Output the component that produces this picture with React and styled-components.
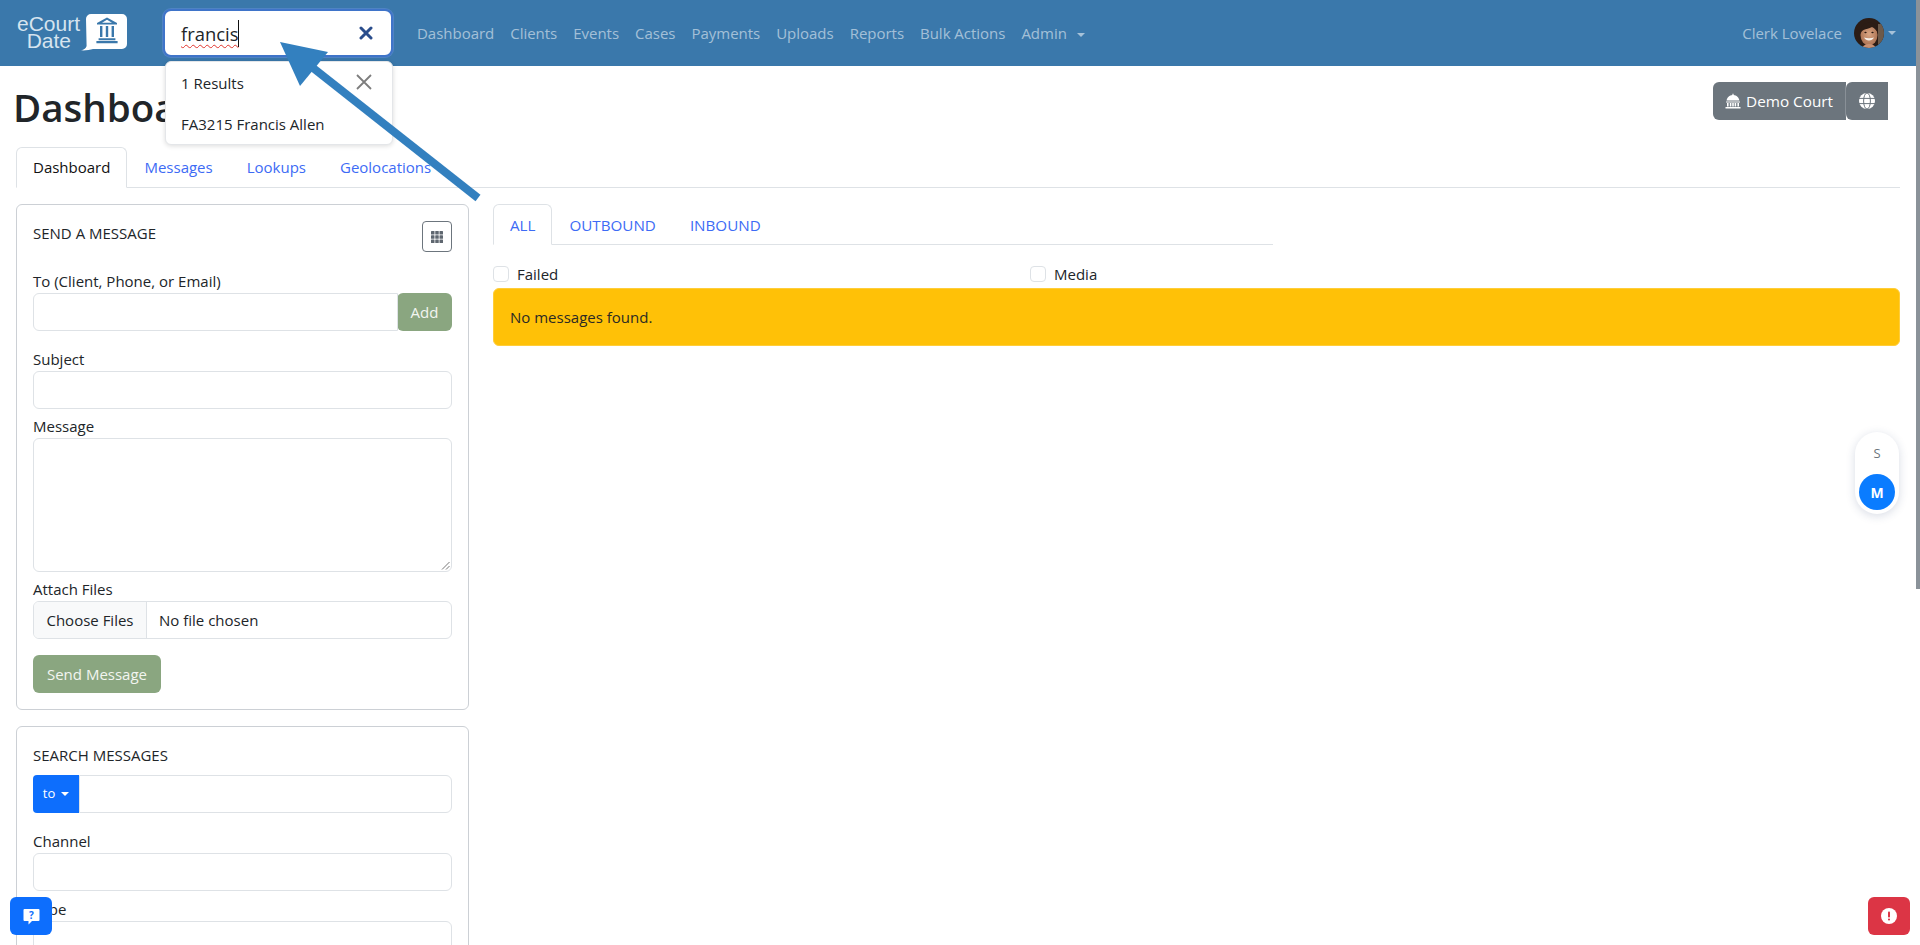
import React from "react";
import styled, { createGlobalStyle } from "styled-components";

const Global = createGlobalStyle`
  html, body { margin: 0; padding: 0; height: 945px; overflow: hidden; background: #fff; }
  body { font-family: "Open Sans", "Noto Sans", "Liberation Sans", sans-serif; font-size: 15px; line-height: 1.5; color: #212529; }
  * { box-sizing: border-box; }
`;

const Page = styled.div`
  position: relative;
  width: 1920px;
  height: 945px;
  overflow: hidden;
`;

const Navbar = styled.nav`
  height: 66px;
  background: #3a78ab;
  display: flex;
  align-items: center;
  padding: 0 24px 0 16px;
`;

const Logo = styled.div`
  width: 112px;
  height: 38px;
  margin-right: 35px;
  display: flex;
  align-items: center;
  flex: none;
  position: relative;
  top: -1px;
`;

const LogoWords = styled.div`
  width: 64px;
  display: flex;
  flex-direction: column;
  align-items: flex-end;
  font-family: "Liberation Sans", Arial, sans-serif;
  font-size: 21px;
  line-height: 17.5px;
  color: #d6e4ef;
`;

const LogoDate = styled.span`
  margin-right: 9px;
`;

const SearchBox = styled.div`
  width: 230px;
  height: 48px;
  flex: none;
  background: #fff;
  border: 2px solid #3f74c9;
  border-radius: 8px;
  box-shadow: 0 0 0 1px rgba(96, 140, 215, 0.55);
  display: flex;
  align-items: center;
  justify-content: space-between;
  padding: 0 18px 0 16px;
`;

const SearchText = styled.span`
  font-size: 18.4px;
  line-height: 27px;
  color: #212529;
  border-right: 1px solid #111;
  text-decoration: underline wavy #e0342c 1.4px;
  text-underline-offset: 3px;
  text-decoration-skip-ink: none;
`;

const ClearIcon = styled.svg`
  width: 14px;
  height: 14px;
  display: block;
  color: #2a4d8c;
`;

const NavLinks = styled.div`
  display: flex;
  align-items: center;
  gap: 16px;
  margin-left: 24px;
`;

const NavLink = styled.a`
  color: rgba(255, 255, 255, 0.55);
  font-size: 15px;
  letter-spacing: -0.02px;
  white-space: nowrap;
`;

const Caret = styled.span`
  display: inline-block;
  width: 0;
  height: 0;
  margin-left: ${(p) => p.$ml || "10px"};
  vertical-align: 2px;
  border-top: 4.8px solid ${(p) => p.$c || "rgba(255,255,255,0.55)"};
  border-left: 4.8px solid transparent;
  border-right: 4.8px solid transparent;
`;

const UserMenu = styled.div`
  margin-left: auto;
  display: flex;
  align-items: center;
  gap: 12px;
`;

const UserAvatar = styled.span`
  display: flex;
  align-items: center;
`;

const Main = styled.main`
  padding: 0 20px 0 16px;
`;

const TitleRow = styled.div`
  height: 81px;
  display: flex;
  justify-content: space-between;
  align-items: flex-start;
  margin-left: -3px;
`;

const Title = styled.h1`
  margin: 17px 0 0;
  font-size: 38.5px;
  font-weight: 600;
  line-height: 48px;
  color: #212529;
`;

const CourtGroup = styled.div`
  display: flex;
  margin: 16px 12px 0 0;
`;

const CourtButton = styled.div`
  height: 38px;
  background: #6c757d;
  color: #fff;
  font-size: 15.3px;
  display: flex;
  align-items: center;
  gap: 5px;
  padding: ${(p) => (p.$globe ? "0 13px" : "0 13px 0 12px")};
  border-radius: 6px 0 0 6px;
  white-space: nowrap;
  box-shadow: ${(p) => (p.$globe ? "-1px 0 0 rgba(255,255,255,0.2)" : "none")};
`;

const TopTabs = styled.div`
  height: 41px;
  display: flex;
  border-bottom: 1px solid #dee2e6;
`;

const TopTab = styled.a`
  height: 41px;
  padding: 8px 16px 8px;
  border: 1px solid ${(p) => (p.$active ? "#dee2e6" : "transparent")};
  border-bottom-color: ${(p) => (p.$active ? "#fff" : "transparent")};
  border-radius: 6px 6px 0 0;
  background: ${(p) => (p.$active ? "#fff" : "transparent")};
  color: ${(p) => (p.$active ? "#111" : "#3d6bf5")};
  white-space: nowrap;
`;

const Columns = styled.div`
  display: flex;
  gap: 24px;
  margin-top: 16px;
  align-items: flex-start;
`;

const Sidebar = styled.aside`
  width: 453px;
  flex: none;
  display: flex;
  flex-direction: column;
  gap: 16px;
`;

const Card = styled.section`
  border: 1px solid #ccd0d5;
  border-radius: 6px;
  padding: 16px;
`;

const CardHead = styled.div`
  display: flex;
  justify-content: space-between;
  align-items: flex-start;
  height: 48px;
`;

const CardTitle = styled.div`
  font-size: 15px;
  line-height: 22px;
  margin-top: 1px;
  color: #212529;
  text-transform: uppercase;
`;

const GridButton = styled.div`
  width: 30px;
  height: 31px;
  border: 1px solid #6c757d;
  border-radius: 4px;
  display: flex;
  align-items: center;
  justify-content: center;
`;

const Field = styled.div`
  margin-bottom: ${(p) => p.$mb || "16px"};
`;

const Label = styled.label`
  display: block;
  height: 24px;
  line-height: 24px;
  font-size: 15px;
  color: #212529;
`;

const InputGroup = styled.div`
  display: flex;
`;

const Input = styled.div`
  flex: 1;
  height: ${(p) => p.$h || "38px"};
  background: #fff;
  border: 1px solid #dee2e6;
  border-radius: ${(p) => p.$r || "6px"};
  position: relative;
`;

const Grip = styled.svg`
  position: absolute;
  right: 1px;
  bottom: 1px;
  width: 9px;
  height: 9px;
`;

const SageButton = styled.div`
  height: 38px;
  width: ${(p) => p.$w};
  flex: none;
  background: #8aa680;
  color: #f2f5f0;
  border-radius: 6px;
  display: flex;
  align-items: center;
  justify-content: center;
  margin-left: ${(p) => p.$ml || "0"};
`;

const FileInput = styled.div`
  height: 38px;
  border: 1px solid #dee2e6;
  border-radius: 6px;
  display: flex;
  align-items: center;
  overflow: hidden;
`;

const FileButton = styled.div`
  height: 100%;
  width: 113px;
  background: #f8f9fa;
  border-right: 1px solid #dee2e6;
  display: flex;
  align-items: center;
  justify-content: center;
`;

const FileName = styled.div`
  padding-left: 12px;
`;

const SearchHead = styled.div`
  line-height: 22px;
  margin: 1px 0 9px;
  text-transform: uppercase;
`;

const SelectButton = styled.div`
  width: 46px;
  height: 38px;
  flex: none;
  background: #0d6efd;
  color: #fff;
  border-radius: 4px 0 0 4px;
  font-size: 13px;
  display: flex;
  align-items: center;
  justify-content: center;
`;

const Content = styled.div`
  flex: 1;
  min-width: 0;
`;

const MsgTabs = styled.div`
  width: 780px;
  height: 41px;
  display: flex;
  border-bottom: 1px solid #dee2e6;
`;

const MsgTab = styled.a`
  height: 41px;
  padding: 9px 16px 7px;
  border: 1px solid ${(p) => (p.$active ? "#dee2e6" : "transparent")};
  border-bottom-color: ${(p) => (p.$active ? "#fff" : "transparent")};
  border-radius: 6px 6px 0 0;
  color: #3d6bf5;
  font-size: 15.2px;
  white-space: nowrap;
`;

const Filters = styled.div`
  display: grid;
  grid-template-columns: 537px 1fr;
  margin-top: 17px;
  height: 26px;
`;

const Check = styled.label`
  display: flex;
  align-items: center;
  gap: 8px;
  height: 24px;
`;

const Box = styled.span`
  width: 16px;
  height: 16px;
  border: 1px solid #dee2e6;
  border-radius: 4px;
  background: #fff;
`;

const Alert = styled.div`
  height: 58px;
  background: #ffc107;
  border: 1px solid #ffcd39;
  border-radius: 6px;
  padding: 1px 16px 0;
  display: flex;
  align-items: center;
  color: #2b2a24;
`;

const Dropdown = styled.div`
  position: absolute;
  left: 165px;
  top: 61px;
  width: 228px;
  height: 84px;
  background: #fff;
  border-radius: 6px;
  border: 1px solid #e4e6e9;
  box-shadow: 0 1px 5px rgba(0, 0, 0, 0.14);
  padding: 9px 16px 9px 15px;
`;

const DropRow = styled.div`
  display: flex;
  justify-content: space-between;
  align-items: center;
  height: 24px;
  margin-bottom: 17px;
  white-space: nowrap;
`;

const DropClose = styled.svg`
  width: 18px;
  height: 18px;
  margin-right: 3px;
  position: relative;
  top: -1px;
`;

const Arrow = styled.svg`
  position: absolute;
  left: 270px;
  top: 35px;
  width: 215px;
  height: 170px;
  pointer-events: none;
`;

const SizeToggle = styled.div`
  position: absolute;
  left: 1855px;
  top: 432px;
  width: 44px;
  height: 82px;
  background: #fff;
  border-radius: 22px;
  box-shadow: 0 2px 10px rgba(40, 60, 110, 0.18);
  padding: 4px;
  display: flex;
  flex-direction: column;
  align-items: center;
`;

const SizeOption = styled.div`
  width: 36px;
  height: 36px;
  border-radius: 50%;
  display: flex;
  align-items: center;
  justify-content: center;
  font-size: ${(p) => (p.$on ? "14px" : "13px")};
  font-weight: ${(p) => (p.$on ? 700 : 400)};
  background: ${(p) => (p.$on ? "#0a7cff" : "transparent")};
  color: ${(p) => (p.$on ? "#fff" : "#6c757d")};
  margin-top: ${(p) => (p.$on ? "2px" : "0")};
`;

const Floating = styled.div`
  position: absolute;
  top: 897px;
  left: ${(p) => p.$left};
  width: 42px;
  height: 38px;
  border-radius: 6px;
  background: ${(p) => p.$bg};
  display: flex;
  align-items: center;
  justify-content: center;
`;

const ScrollThumb = styled.div`
  position: absolute;
  right: 0;
  top: 0;
  width: 4px;
  height: 589px;
  background: #8a9299;
`;

const DomeIcon = () => (
  <svg width="16" height="16" viewBox="0 0 16 16" fill="#fff" style={{ display: "block" }}>
    <path d="M1.6 7.6C1.9 4.5 4.6 2.2 7.4 2V.8h1.2V2c2.8.2 5.5 2.5 5.8 5.6z" />
    <path d="M1 8.4h14v1H1zM2 10h1.6v3.6H2zM4.8 10h1.6v3.6H4.8zM7.2 10h1.6v3.6H7.2zM9.6 10h1.6v3.6H9.6zM12.4 10H14v3.6h-1.6zM.5 14h15v1.6H.5z" />
  </svg>
);

const GlobeIcon = () => (
  <svg width="16" height="16" viewBox="0 0 16 16" fill="none" style={{ display: "block" }}>
    <circle cx="8" cy="8" r="8" fill="#fff" />
    <path d="M0 5.4h16M0 10.6h16" stroke="#6c757d" strokeWidth="1" />
    <ellipse cx="8" cy="8" rx="3.4" ry="8" stroke="#6c757d" strokeWidth="1" />
  </svg>
);

const LogoBubble = () => (
  <svg width="50" height="38" viewBox="0 0 50 38" style={{ display: "block", marginLeft: "-2px" }}>
    <path d="M13 1h31a5 5 0 0 1 5 5v25a5 5 0 0 1-5 5H15c-3 1-8 1.6-12 1.3 3-.5 5.2-2 5.6-4.3L8 6a5 5 0 0 1 5-5z" fill="#fff" />
    <g fill="#3a78ab">
      <path d="M29 4.5 39 10v1.400H19V10zM29 6.800 24 9.700h10z" fillRule="evenodd" />
      <path d="M22 13h2.400v11H22zM27.800 13h2.400v11h-2.400zM33.600 13H36v11h-2.400zM20.600 25.200h16.800v2H20.600zM18.400 28h21.200v2.200H18.400z" />
    </g>
  </svg>
);

const Avatar = () => (
  <svg width="30" height="30" viewBox="0 0 30 30" style={{ display: "block" }}>
    <defs>
      <clipPath id="avatarClip"><circle cx="15" cy="15" r="15" /></clipPath>
      <radialGradient id="faceTone" cx="50%" cy="45%" r="60%">
        <stop offset="0%" stopColor="#d9a583" />
        <stop offset="100%" stopColor="#a96f4f" />
      </radialGradient>
    </defs>
    <g clipPath="url(#avatarClip)">
      <rect width="30" height="30" fill="#2b1c15" />
      <rect x="24" y="6" width="6" height="24" fill="#6d5a4a" />
      <ellipse cx="15" cy="17" rx="8.5" ry="10.500" fill="url(#faceTone)" />
      <path d="M6 16C6 8 10 4.500 15.500 4.500 21 4.500 24.500 9 24 16c-1.500-4-3.500-6-6-7-3 1.500-6 2-8.500 3-1.500 1-2.500 2.500-3.500 4z" fill="#2b1c15" />
      <path d="M8 30c1.500-3 4-4 7-4s5.500 1 7 4z" fill="#c89072" />
      <path d="M10 19.500c2 4 8 4 10 0-3 1-7 1-10 0z" fill="#f6f0ea" />
      <ellipse cx="11.500" cy="14.500" rx="1.200" ry="0.800" fill="#2a1a12" />
      <ellipse cx="18.500" cy="14.500" rx="1.200" ry="0.800" fill="#2a1a12" />
    </g>
  </svg>
);

const navItems = ["Dashboard", "Clients", "Events", "Cases", "Payments", "Uploads", "Reports", "Bulk Actions"];

export default function App() {
  return (
    <Page>
      <Global />
      <Navbar>
        <Logo>
          <LogoWords>
            <span>eCourt</span>
            <LogoDate>Date</LogoDate>
          </LogoWords>
          <LogoBubble />
        </Logo>
        <SearchBox>
          <SearchText>francis</SearchText>
          <ClearIcon viewBox="0 0 14 14">
            <path d="M2 2l10 10M12 2 2 12" stroke="currentColor" strokeWidth="3" strokeLinecap="round" />
          </ClearIcon>
        </SearchBox>
        <NavLinks>
          {navItems.map((n) => (
            <NavLink key={n}>{n}</NavLink>
          ))}
          <NavLink>
            Admin
            <Caret />
          </NavLink>
        </NavLinks>
        <UserMenu>
          <NavLink>Clerk Lovelace</NavLink>
          <UserAvatar>
            <Avatar />
            <Caret $ml="4px" />
          </UserAvatar>
        </UserMenu>
      </Navbar>
      <Main>
        <TitleRow>
          <Title>Dashboard</Title>
          <CourtGroup>
            <CourtButton>
              <DomeIcon />
              Demo Court
            </CourtButton>
            <CourtButton $globe>
              <GlobeIcon />
            </CourtButton>
          </CourtGroup>
        </TitleRow>
        <TopTabs>
          <TopTab $active>Dashboard</TopTab>
          <TopTab>Messages</TopTab>
          <TopTab>Lookups</TopTab>
          <TopTab>Geolocations</TopTab>
        </TopTabs>
        <Columns>
          <Sidebar>
            <Card>
              <CardHead>
                <CardTitle>Send a message</CardTitle>
                <GridButton>
                  <svg width="14" height="14" viewBox="0 0 14 14" fill="#5f6770">
                    {[1, 5.25, 9.5].flatMap((x) =>
                      [1, 5.25, 9.5].map((y) => <rect key={`${x}-${y}`} x={x} y={y} width="3.500" height="3.500" rx="0.500" />)
                    )}
                  </svg>
                </GridButton>
              </CardHead>
              <Field $mb="16px">
                <Label>To (Client, Phone, or Email)</Label>
                <InputGroup>
                  <Input $r="6px 0 0 6px" />
                  <SageButton $w="55px" $ml="-1px">Add</SageButton>
                </InputGroup>
              </Field>
              <Field $mb="5px">
                <Label>Subject</Label>
                <Input />
              </Field>
              <Field $mb="5px">
                <Label>Message</Label>
                <Input $h="134px">
                  <Grip viewBox="0 0 9 9">
                    <path d="M8.500 1 1 8.500M8.500 5 5 8.500" stroke="#555" strokeWidth="0.800" />
                  </Grip>
                </Input>
              </Field>
              <Field>
                <Label>Attach Files</Label>
                <FileInput>
                  <FileButton>Choose Files</FileButton>
                  <FileName>No file chosen</FileName>
                </FileInput>
              </Field>
              <SageButton $w="128px">Send Message</SageButton>
            </Card>
            <Card>
              <SearchHead>Search messages</SearchHead>
              <Field $mb="16px">
                <InputGroup>
                  <SelectButton>
                    to
                    <Caret $ml="6px" $c="#fff" />
                  </SelectButton>
                  <Input $r="0 6px 6px 0" />
                </InputGroup>
              </Field>
              <Field $mb="6px">
                <Label>Channel</Label>
                <Input />
              </Field>
              <Field>
                <Label>Type</Label>
                <Input />
              </Field>
            </Card>
          </Sidebar>
          <Content>
            <MsgTabs>
              <MsgTab $active>ALL</MsgTab>
              <MsgTab>OUTBOUND</MsgTab>
              <MsgTab>INBOUND</MsgTab>
            </MsgTabs>
            <Filters>
              <Check><Box />Failed</Check>
              <Check><Box />Media</Check>
            </Filters>
            <Alert>No messages found.</Alert>
          </Content>
        </Columns>
      </Main>
      <Dropdown>
        <DropRow>
          <span>1 Results</span>
          <DropClose viewBox="0 0 18 18">
            <path d="M2 2l14 14M16 2 2 16" stroke="#7d7d7d" strokeWidth="1.800" />
          </DropClose>
        </DropRow>
        <DropRow>FA3215 Francis Allen</DropRow>
      </Dropdown>
      <Arrow viewBox="0 0 215 170">
        <path d="M208 163 35 26.700" stroke="#3380bf" strokeWidth="8" fill="none" />
        <path d="M10 7 58 17 30 51z" fill="#3380bf" />
      </Arrow>
      <SizeToggle>
        <SizeOption>S</SizeOption>
        <SizeOption $on>M</SizeOption>
      </SizeToggle>
      <Floating $left="10px" $bg="#0d6efd">
        <svg width="17" height="17" viewBox="0 0 17 17">
          <path d="M1.500 1h14a1 1 0 0 1 1 1v10a1 1 0 0 1-1 1H9l-3.500 3.500V13h-4a1 1 0 0 1-1-1V2a1 1 0 0 1 1-1z" fill="#fff" />
          <text x="8.500" y="10.500" fontSize="10" fontWeight="700" textAnchor="middle" fill="#0d6efd" fontFamily="Open Sans, sans-serif">?</text>
        </svg>
      </Floating>
      <Floating $left="1868px" $bg="#dc3545">
        <svg width="16" height="16" viewBox="0 0 16 16">
          <circle cx="8" cy="8" r="8" fill="#fff" />
          <rect x="7" y="3.500" width="2" height="6" rx="0.800" fill="#dc3545" />
          <rect x="7" y="10.500" width="2" height="2" rx="0.800" fill="#dc3545" />
        </svg>
      </Floating>
      <ScrollThumb />
    </Page>
  );
}
